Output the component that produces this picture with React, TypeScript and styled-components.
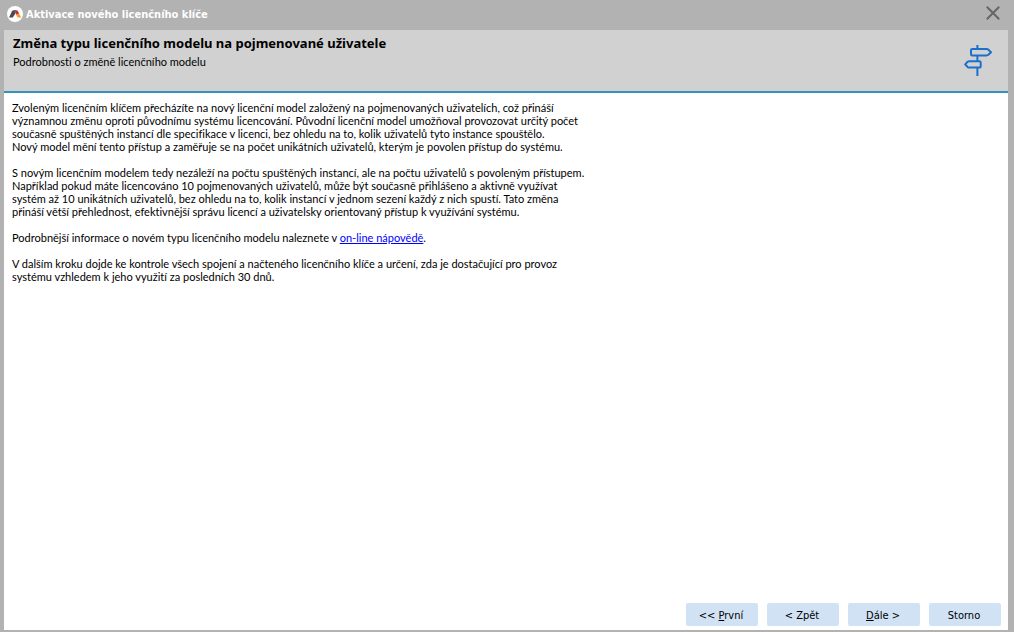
import React from 'react';
import styled, { createGlobalStyle } from 'styled-components';

const GlobalStyle = createGlobalStyle`
  *, *::before, *::after { box-sizing: border-box; }
  body {
    margin: 0;
    background: #b2b2b2;
    color: #000;
    font: 11px/13px Tahoma, Lato, "DejaVu Sans", sans-serif;
    font-variant-ligatures: none;
  }
`;

const Dialog = styled.div`
  display: flex;
  flex-direction: column;
  min-height: 100vh;
  padding: 0 6px 2px 4px;
  background: #b2b2b2;
`;

const TitleBar = styled.div`
  display: flex;
  align-items: center;
  gap: 3px;
  height: 30px;
  padding: 0 8px 2px 3px;
`;

const Title = styled.h1`
  flex: 1;
  margin: 0;
  color: #fff;
  font-family: Tahoma, "DejaVu Sans Condensed", "DejaVu Sans", sans-serif;
  font-size: 11px;
  font-weight: bold;
`;

const CloseButton = styled.button`
  display: flex;
  padding: 0 0 2px;
  border: 0;
  background: none;
  cursor: pointer;
`;

const Header = styled.header`
  display: flex;
  justify-content: space-between;
  align-items: center;
  height: 63px;
  padding: 0 16px 0 9px;
  border-bottom: 2px solid #2f93bd;
  background: #d1d1d1;
`;

const HeaderText = styled.div`
  align-self: flex-start;
  padding-top: 5px;
`;

const Heading = styled.h2`
  margin: 0 0 4px;
  font-family: Tahoma, "Noto Sans", "DejaVu Sans", sans-serif;
  font-size: 13px;
  line-height: 16px;
  font-weight: bold;
`;

const Subheading = styled.p`
  margin: 0;
`;

const Body = styled.main`
  flex: 1;
  padding: 8px;
  background: #fff;
`;

const Paragraph = styled.p`
  margin: 0 0 13px;
  white-space: pre-line;
`;

const HelpLink = styled.a`
  color: #00f;
`;

const Footer = styled.footer`
  display: flex;
  justify-content: flex-end;
  gap: 9px;
  padding: 0 7px 4px;
  background: #fff;
`;

const WizardButton = styled.button`
  width: 72px;
  height: 23px;
  padding: 1px 2px 0 0;
  border: 0;
  border-radius: 2px;
  background: #d1e2f4;
  color: #000;
  font: 11px/13px Tahoma, "DejaVu Sans Condensed", "DejaVu Sans", sans-serif;
  cursor: pointer;
`;

const LogoIcon = () => (
  <svg width="16" height="16" viewBox="0 0 16 16" aria-hidden="true">
    <circle cx="8" cy="8" r="8" fill="#fff" />
    <path d="M2 11.5 5 5.2Q5.5 4.2 6.8 4.2H9L8.4 7.4 5.8 11.5Z" fill="#4b4a52" />
    <path d="M7.8 4.2H9.5Q10.6 4.2 11 5.2L12.2 7.8 9.4 9Z" fill="#c92a55" />
    <path d="M9.2 8.7 12 7.2 14.2 11.5H10.6Z" fill="#f6a01a" />
  </svg>
);

const CloseIcon = () => (
  <svg width="14" height="14" viewBox="0 0 14 14" aria-hidden="true">
    <path d="M.8.8 13.2 13.2M13.2.8.8 13.2" stroke="#666" strokeWidth="2" />
  </svg>
);

const SignpostIcon = () => (
  <svg width="28" height="32" viewBox="0 0 28 32" fill="none" stroke="#1b70cc" strokeWidth="2" strokeLinejoin="round" aria-hidden="true">
    <path d="M13.4 0V4M13.4 10.5V16M13.4 22.5V31" />
    <path d="M8.2 4H22.6Q23.6 4 24.4 4.6L27 7.2 24.4 9.8Q23.6 10.4 22.6 10.4H8.2Q7 10.4 7 9.2V5.2Q7 4 8.2 4Z" />
    <path d="M15.5 16.2H5.2Q4.3 16.2 3.6 16.8L1.2 19.4 3.6 22Q4.3 22.6 5.2 22.6H15.5Q16.7 22.6 16.7 21.4V17.4Q16.7 16.2 15.5 16.2Z" />
  </svg>
);

export default function App() {
  return (
    <>
      <GlobalStyle />
      <Dialog role="dialog" aria-labelledby="dialog-title">
        <TitleBar>
          <LogoIcon />
          <Title id="dialog-title">Aktivace nového licenčního klíče</Title>
          <CloseButton type="button" aria-label="Zavřít">
            <CloseIcon />
          </CloseButton>
        </TitleBar>
        <Header>
          <HeaderText>
            <Heading>Změna typu licenčního modelu na pojmenované uživatele</Heading>
            <Subheading>Podrobnosti o změně licenčního modelu</Subheading>
          </HeaderText>
          <SignpostIcon />
        </Header>
        <Body>
          <Paragraph>
            {`Zvoleným licenčním klíčem přecházíte na nový licenční model založený na pojmenovaných uživatelích, což přináší
významnou změnu oproti původnímu systému licencování. Původní licenční model umožňoval provozovat určitý počet
současně spuštěných instancí dle specifikace v licenci, bez ohledu na to, kolik uživatelů tyto instance spouštělo.
Nový model mění tento přístup a zaměřuje se na počet unikátních uživatelů, kterým je povolen přístup do systému.`}
          </Paragraph>
          <Paragraph>
            {`S novým licenčním modelem tedy nezáleží na počtu spuštěných instancí, ale na počtu uživatelů s povoleným přístupem.
Například pokud máte licencováno 10 pojmenovaných uživatelů, může být současně přihlášeno a aktivně využívat
systém až 10 unikátních uživatelů, bez ohledu na to, kolik instancí v jednom sezení každý z nich spustí. Tato změna
přináší větší přehlednost, efektivnější správu licencí a uživatelsky orientovaný přístup k využívání systému.`}
          </Paragraph>
          <Paragraph>
            Podrobnější informace o novém typu licenčního modelu naleznete v <HelpLink href="#napoveda">on-line nápovědě</HelpLink>.
          </Paragraph>
          <Paragraph>
            {`V dalším kroku dojde ke kontrole všech spojení a načteného licenčního klíče a určení, zda je dostačující pro provoz
systému vzhledem k jeho využití za posledních 30 dnů.`}
          </Paragraph>
        </Body>
        <Footer>
          <WizardButton type="button">&lt;&lt; <u>P</u>rvní</WizardButton>
          <WizardButton type="button">&lt; Zpět</WizardButton>
          <WizardButton type="button"><u>D</u>ále &gt;</WizardButton>
          <WizardButton type="button">Storno</WizardButton>
        </Footer>
      </Dialog>
    </>
  );
}
